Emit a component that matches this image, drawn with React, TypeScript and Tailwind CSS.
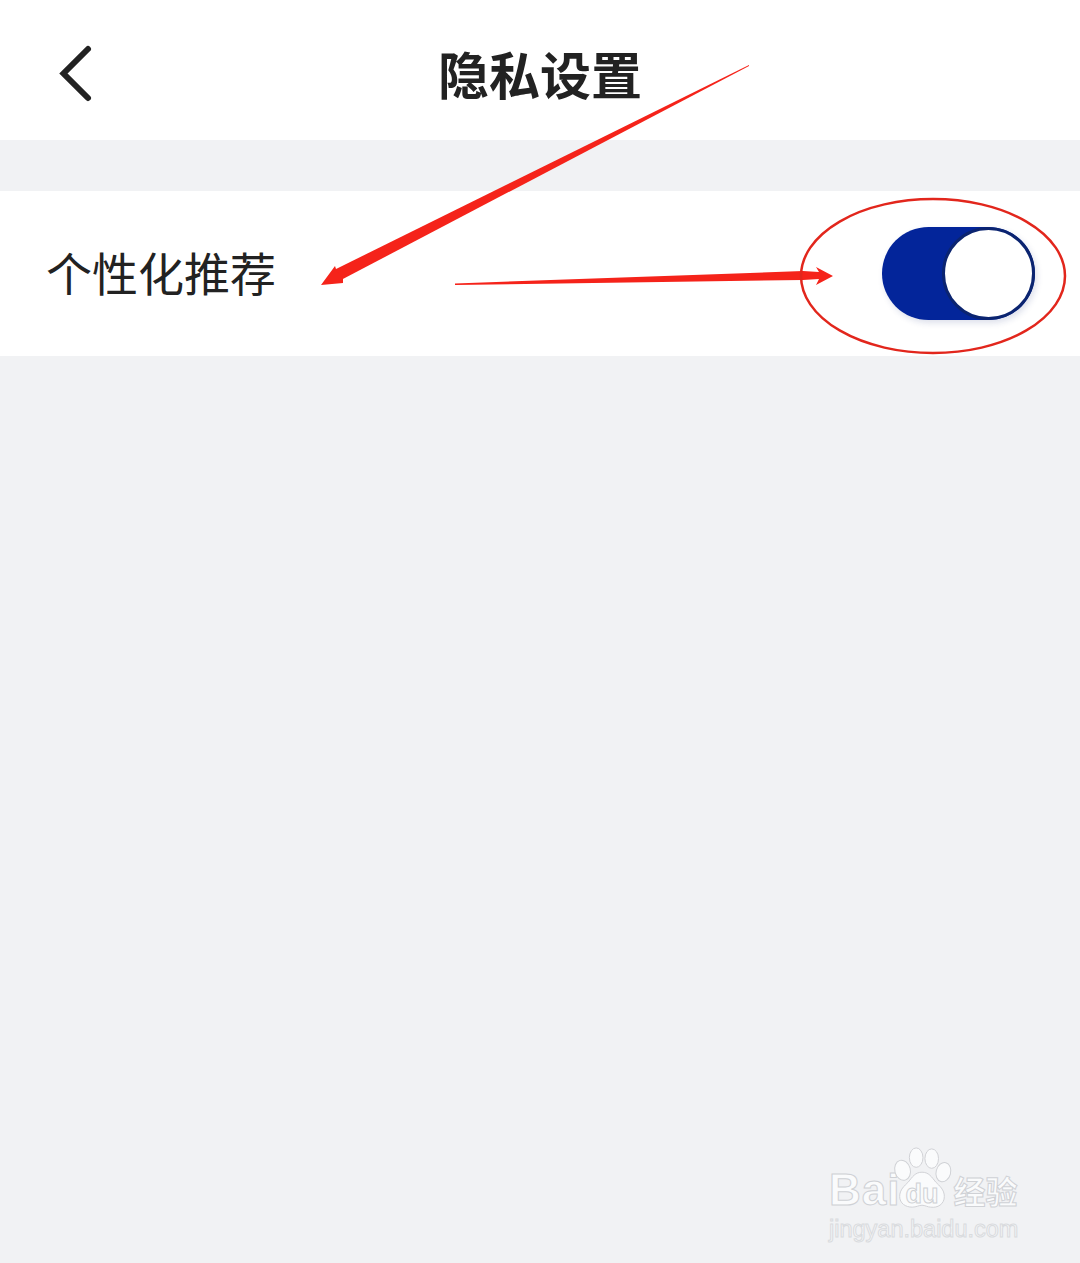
const cjk = "font-['Noto_Sans_CJK_SC','Noto_Sans',sans-serif]";

function Annotations() {
  return (
    <svg className="absolute inset-0 pointer-events-none" width="1080" height="1263" viewBox="0 0 1080 1263">
      {/* long arrow to the label */}
      <polygon points="749,65 334,270 341,280 749,66" fill="#f5231a" />
      <polygon points="321,285 335,266 337,272 343,277 343,283" fill="#f5231a" />
      {/* arrow to the switch */}
      <polygon points="455,283.5 803,271 803,280 455,285" fill="#f5231a" />
      <polygon points="833,276 816,267 819,272 803,271 803,280 819,279 816,285" fill="#f5231a" />
      {/* circle round the switch */}
      <ellipse cx="933" cy="276" rx="132" ry="77" fill="none" stroke="#e2261c" strokeWidth="2.5" />
    </svg>
  );
}

function Watermark() {
  const outline = "text-[#fafbfc] [-webkit-text-stroke:1px_#cfd1d5]";
  return (
    <div className="absolute left-[829px] top-[1146px] flex flex-col w-[196px] font-['Liberation_Sans',sans-serif]">
      <div className="flex items-end h-[66px]">
        <span className={`shrink-0 text-[44px] leading-[48px] font-bold tracking-[1px] mb-[-2px] ${outline}`}>Bai</span>
        <div className="relative -ml-[12px] w-[65px] h-[66px] shrink-0">
          <svg width="68" height="66" viewBox="0 0 70 66">
            <g fill="#fafbfc" stroke="#cfd1d5" strokeWidth="1">
              <ellipse cx="15" cy="24" rx="8" ry="10.5" transform="rotate(-15 15 24)" />
              <ellipse cx="29" cy="11" rx="7" ry="10" />
              <ellipse cx="45" cy="12" rx="7" ry="10" />
              <ellipse cx="57" cy="26" rx="7.5" ry="10" transform="rotate(15 57 26)" />
              <path d="M35 26c7 0 10 5 14 10 4 4 9 8 9 15 0 8-7 12-14 11-3 0-6-2-9-2s-6 2-10 2c-7 0-13-4-13-11 0-7 5-11 9-15 4-5 7-10 14-10z" />
            </g>
          </svg>
          <span className={`absolute left-[17px] top-[33px] text-[27px] leading-[30px] font-bold ${outline}`}>du</span>
        </div>
        <span className={`shrink-0 whitespace-nowrap text-[32px] leading-[44px] font-bold ${cjk} ${outline}`}>经验</span>
      </div>
      <span className="mt-[2px] whitespace-nowrap text-[23.5px] leading-[30px] text-[#f5f6f7] [-webkit-text-stroke:1px_#d9dbde]">jingyan.baidu.com</span>
    </div>
  );
}

export default function App() {
  return (
    <div className={`relative w-[1080px] h-[1263px] overflow-hidden bg-[#f1f2f4] text-[#222222] ${cjk}`}>
      <header className="grid grid-cols-[1fr_auto_1fr] items-center h-[140px] pt-[6px] pl-[56px] bg-white">
        <svg width="40" height="60" viewBox="0 0 40 60" fill="none">
          <path d="M32 6 L7.5 30.5 L32 55" stroke="#222222" strokeWidth="6" strokeLinecap="round" />
        </svg>
        <h1 className="-ml-[56px] text-[51px] leading-[70px] font-bold">隐私设置</h1>
      </header>

      <div className="flex items-center justify-between mt-[51px] h-[165px] pl-[46px] pr-[45px] bg-white">
        <span className="text-[46px] leading-[64px] mb-[6px]">个性化推荐</span>
        <div className="flex justify-end w-[153px] h-[93px] rounded-full bg-[#03259a] shadow-[2px_3px_6px_rgba(30,50,120,0.15)]">
          <div className="w-[93px] h-[93px] rounded-full bg-white border-[3px] border-[#0b2470]"></div>
        </div>
      </div>

      <Annotations />
      <Watermark />
    </div>
  );
}
